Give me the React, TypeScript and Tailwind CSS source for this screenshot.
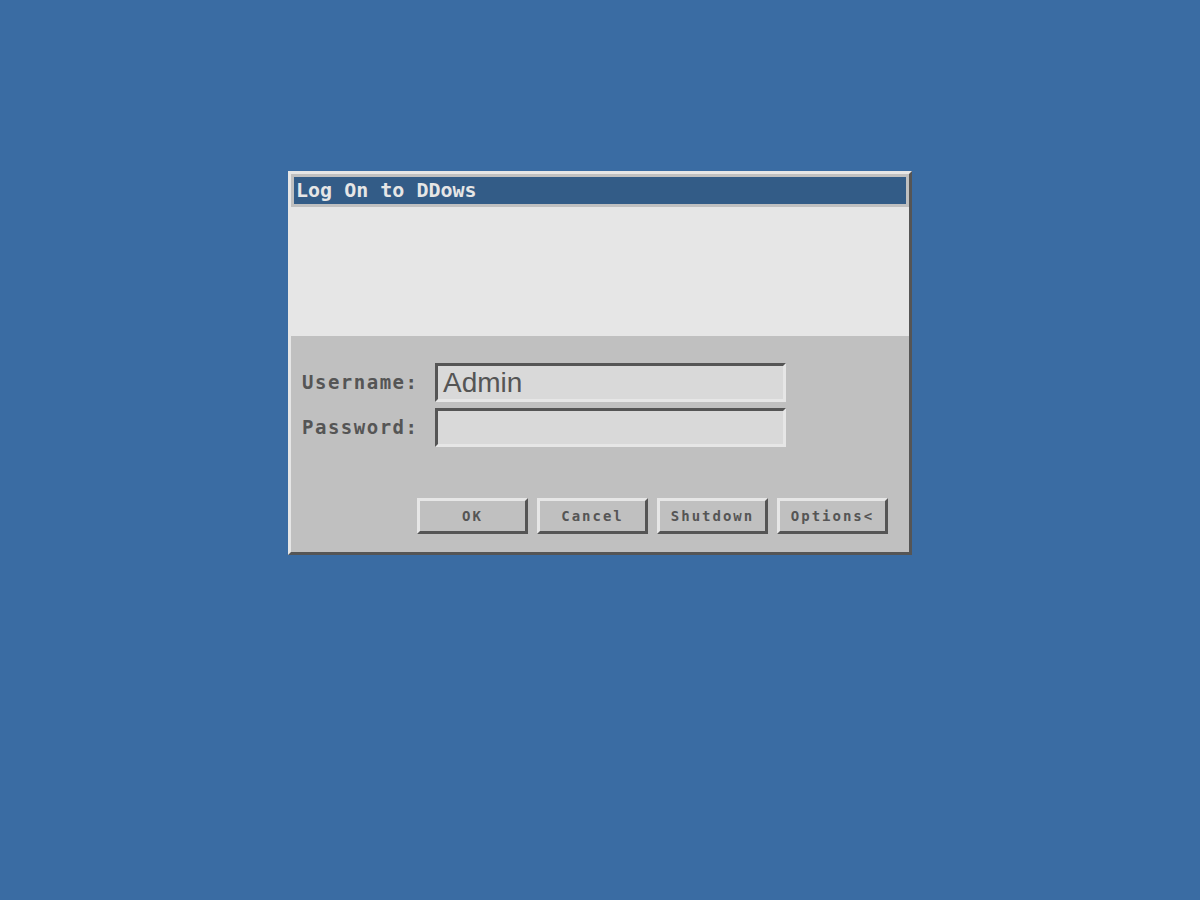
import React from "react";

const mono = "font-['DejaVu_Sans_Mono',monospace]";

function Field({ label, value }: { label: string; value?: string }) {
  return (
    <div className="flex items-center">
      <label className={`w-[133px] ${mono} text-[19px] font-bold tracking-[1.5px] text-[#555555] leading-none`}>
        {label}
      </label>
      <div className="flex h-[39px] w-[351px] items-center border-[3px] border-t-[#555555] border-l-[#555555] border-b-[#e6e6e6] border-r-[#e6e6e6] bg-[#d9d9d9] pl-[5px]">
        <span className="font-['Liberation_Sans',sans-serif] text-[28px] leading-none text-[#555555]">{value}</span>
      </div>
    </div>
  );
}

function Button({ children }: { children: React.ReactNode }) {
  return (
    <button
      type="button"
      className={`flex h-[36px] w-[111px] items-center justify-center border-[3px] border-t-[#e6e6e6] border-l-[#e6e6e6] border-b-[#555555] border-r-[#555555] bg-[#c0c0c0] ${mono} text-[14px] font-bold tracking-[2px] text-[#555555]`}
    >
      {children}
    </button>
  );
}

export default function App() {
  return (
    <div className="flex min-h-[900px] w-full justify-center bg-[#3a6ca3] pt-[171px]">
      <div className="flex h-[384px] w-[624px] flex-col border-[3px] border-t-[#e6e6e6] border-l-[#e6e6e6] border-b-[#555555] border-r-[#555555] bg-[#e6e6e6]">
        {/* title bar */}
        <div className="border-[3px] border-[#c0c0c0]">
          <div className={`h-[27px] bg-[#335c87] pl-[2px] ${mono} text-[20px] font-bold leading-[27px] text-[#e6e6e6]`}>
            Log On to DDows
          </div>
        </div>
        {/* banner */}
        <div className="h-[129px] bg-[#e6e6e6]" />
        {/* body */}
        <div className="flex flex-1 flex-col bg-[#c0c0c0] pt-[27px] pl-[11px] pr-[21px] pb-[18px]">
          <div className="flex flex-col gap-[6px]">
            <Field label="Username:" value="Admin" />
            <Field label="Password:" />
          </div>
          <div className="mt-auto flex justify-end gap-[9px]">
            <Button>OK</Button>
            <Button>Cancel</Button>
            <Button>Shutdown</Button>
            <Button>Options&lt;</Button>
          </div>
        </div>
      </div>
    </div>
  );
}
